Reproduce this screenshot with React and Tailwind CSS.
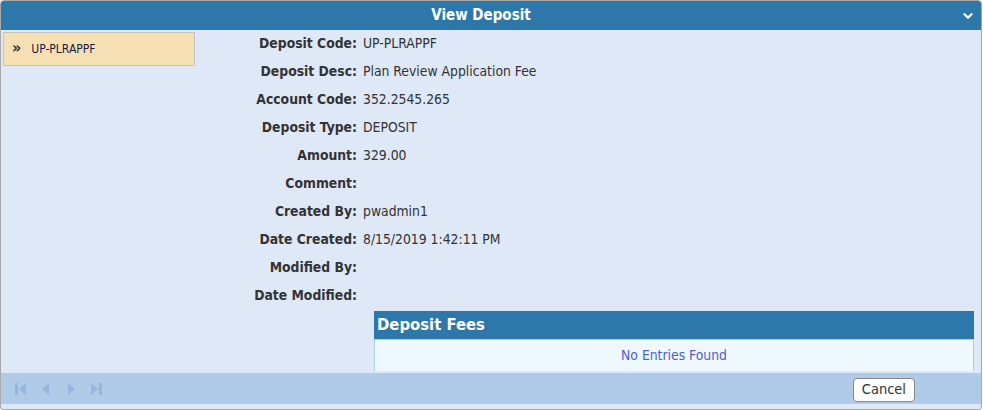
import React from "react";
import { ChevronDown } from "lucide-react";

const rows = [
  ["Deposit Code:", "UP-PLRAPPF"],
  ["Deposit Desc:", "Plan Review Application Fee"],
  ["Account Code:", "352.2545.265"],
  ["Deposit Type:", "DEPOSIT"],
  ["Amount:", "329.00"],
  ["Comment:", ""],
  ["Created By:", "pwadmin1"],
  ["Date Created:", "8/15/2019 1:42:11 PM"],
  ["Modified By:", ""],
  ["Date Modified:", ""],
];

const PagerIcon = ({ type }) => (
  <svg width="14" height="16" viewBox="0 0 14 16" className="opacity-80">
    {type === "first" && (
      <>
        <rect x="1" y="2" width="3" height="12" fill="#8fb2e0" />
        <path d="M12 2 L5 8 L12 14 Z" fill="#8fb2e0" />
      </>
    )}
    {type === "prev" && <path d="M10 2 L3 8 L10 14 Z" fill="#8fb2e0" />}
    {type === "next" && <path d="M4 2 L11 8 L4 14 Z" fill="#8fb2e0" />}
    {type === "last" && (
      <>
        <path d="M2 2 L9 8 L2 14 Z" fill="#8fb2e0" />
        <rect x="10" y="2" width="3" height="12" fill="#8fb2e0" />
      </>
    )}
  </svg>
);

export default function App() {
  return (
    <div
      className="w-[983px] h-[410px] bg-white"
      style={{ fontFamily: "'DejaVu Sans Condensed', 'DejaVu Sans', sans-serif" }}
    >
      <div className="w-[982px] h-[410px] border border-[#a9a9a9] rounded-t-[4px] rounded-b-[3px] bg-[#dfe8f6] flex flex-col overflow-hidden">
        {/* header */}
        <div className="h-[29px] bg-[#2e77aa] relative flex items-center justify-center pr-[20px]">
          <span className="text-white font-bold text-[15px]">View Deposit</span>
          <ChevronDown
            className="absolute right-[6px] top-[8px] text-white"
            size={14}
            strokeWidth={4}
          />
        </div>

        <div className="flex flex-1">
          {/* list */}
          <div className="w-[194px] pt-[2px] pl-[2px]">
            <div className="h-[34px] bg-[#f6dfb3] border border-[#c3c3c3] flex items-center pl-[8px] text-[12px] text-[#1a1a40]">
              <span className="text-[16px] font-bold text-[#333] mr-[10px] leading-none -mt-[3px]">»</span>
              <span>UP-PLRAPPF</span>
            </div>
          </div>

          {/* details */}
          <div className="flex-1 flex flex-col">
            <div className="grid grid-cols-[162px_1fr] gap-x-[6px] -mt-[1px]">
              {rows.map(([label, value]) => (
                <React.Fragment key={label}>
                  <div className="h-[28px] flex items-center justify-end font-bold text-[13.8px] text-[#333]">
                    {label}
                  </div>
                  <div className="h-[28px] flex items-center text-[13.8px] text-[#333]">
                    {value}
                  </div>
                </React.Fragment>
              ))}
            </div>

            <div className="ml-[179px] mr-[7px] mt-[2px]">
              <div className="h-[28px] bg-[#2e77aa] flex items-center pl-[3px] text-white font-bold text-[16.5px]">
                Deposit Fees
              </div>
              <div className="h-[32px] bg-[#f0f8ff] border-x border-t border-[#a8d0ea] flex items-center justify-center text-[13.8px] text-[#4a5fd6]">
                No Entries Found
              </div>
            </div>
          </div>
        </div>

        {/* footer */}
        <div className="h-[31px] bg-[#afcbe8] mb-[5px] flex items-center justify-between pl-[13px] pr-[66px]">
          <div className="flex items-center gap-[11px]">
            <PagerIcon type="first" />
            <PagerIcon type="prev" />
            <PagerIcon type="next" />
            <PagerIcon type="last" />
          </div>
          <button className="h-[24px] px-[8px] mt-[3px] bg-white border border-[#888] rounded-[4px] text-[14.5px] text-[#333]">
            Cancel
          </button>
        </div>
      </div>
    </div>
  );
}
